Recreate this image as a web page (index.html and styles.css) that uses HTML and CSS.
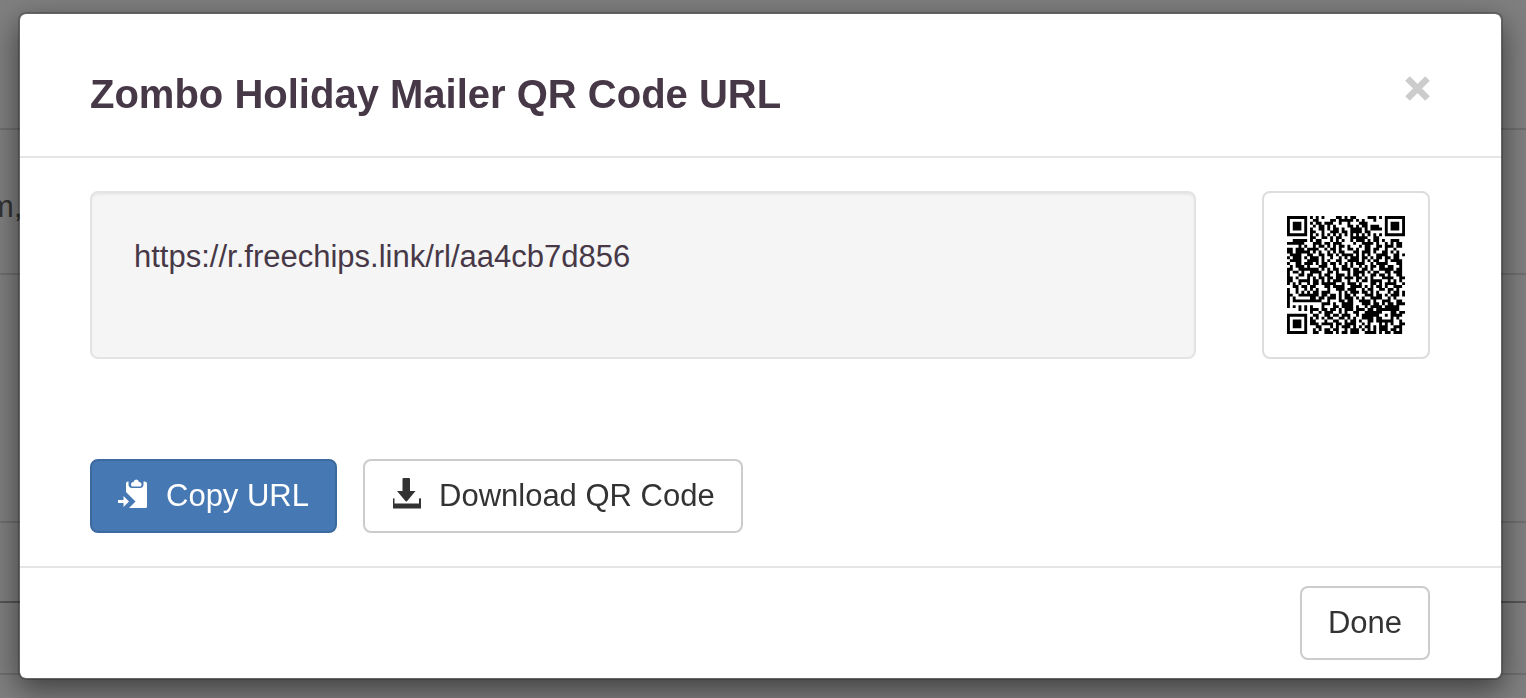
FILE: index.html
```html
<!DOCTYPE html>
<html lang="en">
<head>
<meta charset="utf-8">
<title>Zombo Holiday Mailer QR Code URL</title>
<link rel="stylesheet" href="styles.css">
</head>
<body>
<div class="page">
  <div class="page-row page-row-top"></div>
  <div class="page-row page-row-text">m,</div>
  <div class="page-row page-row-tall"></div>
  <div class="page-row page-row-short"></div>
  <div class="page-row page-row-last"></div>
</div>
<div class="backdrop">
  <section class="modal" role="dialog" aria-modal="true" aria-labelledby="modal-title">
    <header class="modal-header">
      <h1 class="modal-title" id="modal-title">Zombo Holiday Mailer QR Code URL</h1>
      <button class="close" type="button" aria-label="Close"><svg class="close-icon" viewBox="0 0 25 25" aria-hidden="true"><path d="M2.500 2.500L22.500 22.500M22.500 2.500L2.500 22.500" stroke="currentColor" stroke-width="6.500"/></svg></button>
    </header>
    <div class="modal-body">
      <div class="link-row">
        <div class="well">https://r.freechips.link/rl/aa4cb7d856</div>
        <div class="thumbnail"><svg class="qr" id="qr" viewBox="0 0 41 41" role="img" aria-label="QR code"></svg></div>
      </div>
      <div class="actions">
        <button class="btn btn-primary" type="button">
          <svg class="icon" viewBox="0 0 30 32" aria-hidden="true"><path fill="currentColor" d="M8 5.500Q8 4 9.500 3.500L10.500 3.500V6Q10.500 10 14 10H22Q25.500 10 25.500 6V3.500L27 3.500Q29 4 29 5.500V28.500Q29 30 27.500 30H11L17.500 23.500L8 14ZM13 6.500Q13 4 15.500 4Q16 1.500 18.200 1.500T21 4Q23.500 4 23.500 6.500Q23.500 8.500 22 8.500H14.500Q13 8.500 13 6.500ZM0 22H5.500V18L11 23.500L5.500 29V25H0Z"/></svg>
          <span>Copy URL</span>
        </button>
        <button class="btn btn-default" type="button">
          <svg class="icon" viewBox="0 0 30 32" aria-hidden="true"><path fill="currentColor" d="M12.500 0H18Q19 0 19 1V13H24.500L16 23.200Q15.300 24 14.600 23.200L6 13H11.500V1Q11.500 0 12.500 0ZM2 20.500Q2 20 3.500 20.500V25.500H28V20.500Q30 20 30 20.500V30.500H2Z"/></svg>
          <span>Download QR Code</span>
        </button>
      </div>
    </div>
    <footer class="modal-footer">
      <button class="btn btn-default" type="button">Done</button>
    </footer>
  </section>
</div>
<script src="qr.js"></script>
</body>
</html>
```
FILE: qr.js
```js
const rows = [
  "#######.#.#.#....##.#.##....###.#.#######",
  "#.....#..##....##.#####.#.#...#...#.....#",
  "#.###.#.#.##.###..#..#...###......#.###.#",
  "#.###.#..#.##.#.#....##.#.##.###..#.###.#",
  "#.###.#.#..##.#.##.#..####.#.####.#.###.#",
  "#.....#.##..#..###.##.####.##.....#.....#",
  "#######.#.#.#.#.#.#.#.#.#.#.#.#.#.#######",
  "........##..##.#.##...######..##.........",
  "..#####.#.##...#.#.#..#.###.#.##.#..###..",
  "######...###.##.###....#..####.#..#.#.##.",
  "....#.#..#.##.#.#.##.#...#.##..##.###.##.",
  "##.###.####..#.##.#..##.#..##.##..#..#...",
  "##.#####.#.#..#.#.##...##.###.#..##.#.#..",
  ".####..##..##.##.#.####.#.#.#..####..##.#",
  "#.###.#.###.#..#..#.#.###.##.#.##.##.##..",
  ".####..####.#.#..##..####.#.#.##..#.####.",
  "#..##.###.#.##.##.#.#.#.###..#.####...##.",
  ".#.###.#...###..#..##.#..#.#.##.##.##..#.",
  "##..#######.#.#.##.###.##.##.#..#####.##.",
  "#.##.#..####..##.#...#.####.#.##..##.###.",
  "#...##.##..#.##..###.#.##.#..##.##.#..##.",
  "##.#...#.#.##.##.##.###.##.#.#...####..##",
  "##..####.##.#.#.###..#..#.##.####..#.#.#.",
  "#.#.#..#.##.#####..#.###.#...##.#.####..#",
  "..##.##.##...##.####..####.#.#.##.#..###.",
  "#..#..#.#.#...#..###.###..#.##..##.##.#..",
  "#..#.#.#.##.###...#.#.###.##.#.#...#.##.#",
  "##..#######.##.##.#.##.#...###.##.#.###.#",
  "#.#.....##.##.###.#.###.#.#..####..#.#...",
  "#.##########..#...##.##..####.#..###..##.",
  "#...........###.#..####...###.##.#.##.###",
  "#.#.#.#.#...#...##.####.#..#.####.#####..",
  "....#.#.###.##.##.#.###.###.##.########..",
  "........#..#.###..#.#..##..######...##.##",
  "#######..##..##.##.###..#.######..#.####.",
  "#.....#.#.#.#.##..##.#.#..####.##...#.#..",
  "#.###.#.##...#..##..#.##.#..##.######..#.",
  "#.###.#.###.####.##.####..#.#...#.#.#..##",
  "#.###.#...##...#.#.###.#.#.##.#.###..###.",
  "#.....#..#.#.##.##..#.###.#.#.#.###.##.#.",
  "#######..##..###.#.##.###..####.#.##.###."
];

const path = document.createElementNS("http://www.w3.org/2000/svg", "path");
path.setAttribute("d", rows.map((row, y) =>
  [...row].map((cell, x) => cell === "#" ? `M${x} ${y}h1v1h-1z` : "").join("")
).join(""));
document.getElementById("qr").appendChild(path);
```
FILE: styles.css
```css
* { box-sizing: border-box; }

body {
  margin: 0;
  background: #fff;
  color: #333;
  font-family: "Liberation Sans", Arial, sans-serif;
  font-size: 31px;
  line-height: 44px;
}

button { font: inherit; cursor: pointer; }

.page { height: 100vh; overflow: hidden; }
.page-row { border-bottom: 2px solid #ddd; }
.page-row-top { height: 130px; }
.page-row-text { height: 145px; padding-top: 55px; color: #666; text-indent: -12px; }
.page-row-tall { height: 248px; }
.page-row-short { height: 80px; border-color: #aaa; }
.page-row-last { height: 72px; }

.backdrop {
  position: fixed;
  inset: 0;
  padding: 12px 23px 18px 18px;
  background: rgba(0, 0, 0, 0.5);
}

.modal {
  background: #fff;
  background-clip: padding-box;
  border: 2px solid rgba(0, 0, 0, 0.2);
  border-radius: 8px;
  box-shadow: 0 10px 30px rgba(0, 0, 0, 0.5);
}

.modal-header {
  display: flex;
  justify-content: space-between;
  align-items: flex-start;
  padding: 50px 71px 32px 70px;
  border-bottom: 2px solid #e5e5e5;
}

.modal-title {
  margin: 0;
  color: #473847;
  font-size: 40px;
  line-height: 60px;
}

.close {
  margin-top: 12px;
  padding: 0;
  border: 0;
  background: none;
  color: #ccc;
}

.close-icon { display: block; width: 25px; height: 25px; }

.modal-body { padding: 33px 71px 33px 70px; }

.link-row { display: flex; gap: 66px; }

.well {
  flex: 1;
  padding: 42px;
  border: 2px solid #e3e3e3;
  border-radius: 8px;
  background: #f5f5f5;
  box-shadow: inset 0 2px 2px rgba(0, 0, 0, 0.05);
  color: #473847;
}

.thumbnail {
  padding: 23px;
  border: 2px solid #ddd;
  border-radius: 8px;
}

.qr { display: block; width: 118px; height: 118px; }

.actions { display: flex; gap: 26px; margin-top: 100px; }

.btn {
  display: inline-flex;
  align-items: center;
  gap: 18px;
  padding: 13px 26px;
  border: 2px solid #ccc;
  border-radius: 8px;
  background: #fff;
  color: #333;
}

.btn-primary { background: #4679b4; border-color: #3c6a9e; color: #fff; }

.icon { width: 30px; height: 32px; margin-bottom: 4px; }

.modal-footer {
  display: flex;
  justify-content: flex-end;
  padding: 18px 71px 18px 70px;
  border-top: 2px solid #e5e5e5;
}
```
